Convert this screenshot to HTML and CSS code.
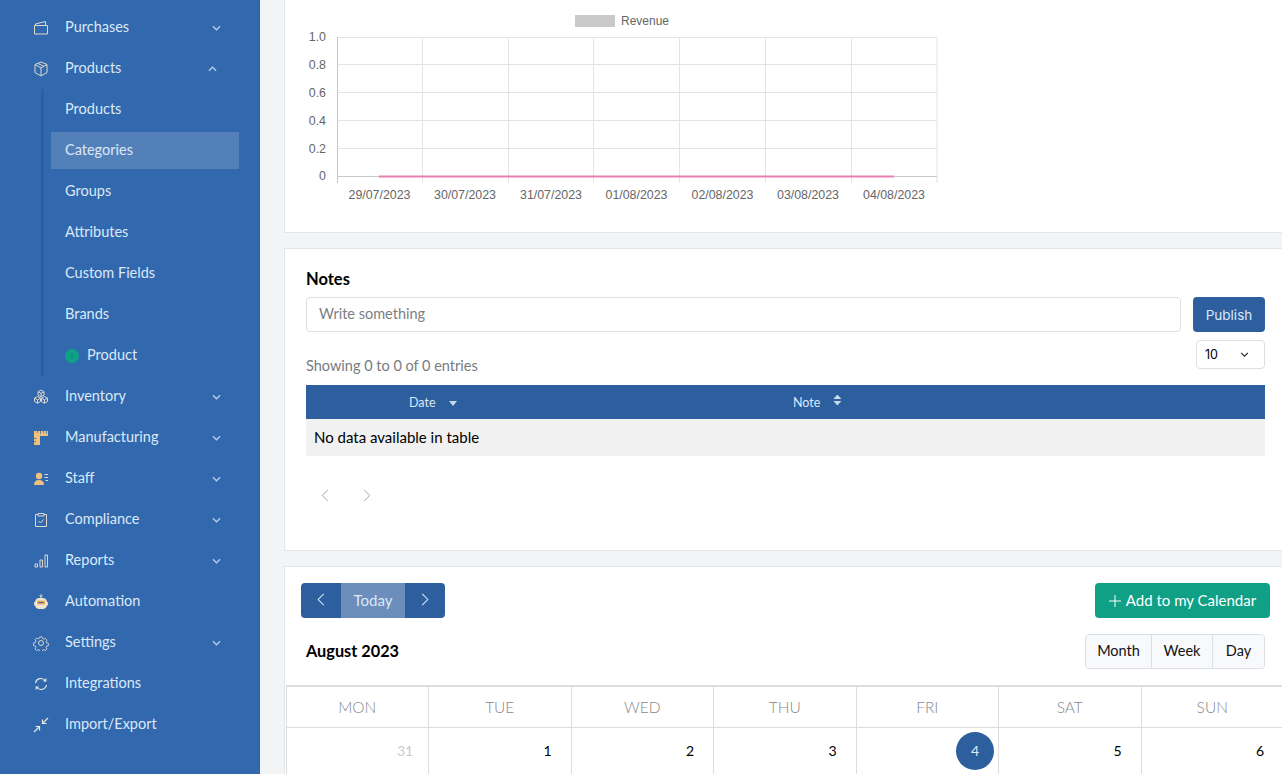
FILE: index.html
```html
<!DOCTYPE html>
<html lang="en">
<head>
    <meta charset="UTF-8">
    <title>Dashboard</title>
    <link rel="stylesheet" href="styles.css">
</head>
<body>
    <aside class="sidebar">
        <a class="nav-item"><svg class="nav-icon" viewBox="0 0 16 16"><path d="M1.500 5.500h13v8.500h-13zM2.500 5.500v-1.500l10-2.500v4"/></svg><span class="nav-label">Purchases</span><svg class="chev" viewBox="0 0 10 6"><path d="M1 1l4 4 4-4"/></svg></a>
        <a class="nav-item"><svg class="nav-icon" viewBox="0 0 16 16"><path d="M8 1l6 2.500v8L8 15l-6-3.500v-8zM2 3.500L8 7l6-3.500M8 7v8M5 2.500l6 3"/></svg><span class="nav-label">Products</span><svg class="chev chev-up" viewBox="0 0 10 6"><path d="M1 5l4-4 4 4"/></svg></a>

        <div class="subnav">
            <a class="sub-item">Products</a>
            <a class="sub-item active">Categories</a>
            <a class="sub-item">Groups</a>
            <a class="sub-item">Attributes</a>
            <a class="sub-item">Custom Fields</a>
            <a class="sub-item">Brands</a>
            <a class="sub-item"><span class="dot"></span>Product</a>
        </div>

        <a class="nav-item"><svg class="nav-icon" viewBox="0 0 16 16"><path d="M8 1l3 1.700v3.300l-3 1.700-3-1.700V2.700zM5 2.700l3 1.700 3-1.700M8 4.400V8M4.500 7.500l3 1.700v3.300l-3 1.700-3-1.700V9.200zM1.500 9.200l3 1.700 3-1.700M4.500 10.900v3.300M11.500 7.500l3 1.700v3.300l-3 1.700-3-1.700V9.200zM8.500 9.200l3 1.700 3-1.700M11.500 10.900v3.300"/></svg><span class="nav-label">Inventory</span><svg class="chev" viewBox="0 0 10 6"><path d="M1 1l4 4 4-4"/></svg></a>
        <a class="nav-item"><svg class="nav-icon solid" viewBox="0 0 16 16"><path d="M1 1h14v5H7v9H1z"/><path class="notch" d="M4.500 1v2M7.500 1v3M10.500 1v2M13.500 1v3M1 8.500h2.500M1 11.500h2"/></svg><span class="nav-label">Manufacturing</span><svg class="chev" viewBox="0 0 10 6"><path d="M1 1l4 4 4-4"/></svg></a>
        <a class="nav-item"><svg class="nav-icon solid" viewBox="0 0 16 16"><circle cx="6" cy="5" r="3.200"/><path d="M1 14c0-3.200 2-5 5-5s5 1.800 5 5z"/><path class="thin" d="M11.500 3.500H15M11.500 6.500H15M12.500 9.500H15"/></svg><span class="nav-label">Staff</span><svg class="chev" viewBox="0 0 10 6"><path d="M1 1l4 4 4-4"/></svg></a>
        <a class="nav-item"><svg class="nav-icon" viewBox="0 0 16 16"><path d="M5 2.500H2.500v12h11v-12H11M5 1.500h6v2.500H5zM5.500 9l2 2 3-3.500"/></svg><span class="nav-label">Compliance</span><svg class="chev" viewBox="0 0 10 6"><path d="M1 1l4 4 4-4"/></svg></a>
        <a class="nav-item"><svg class="nav-icon" viewBox="0 0 16 16"><path d="M2 11h2.500v3H2zM7 7h2.500v7H7zM12 2h2.500v12H12z"/></svg><span class="nav-label">Reports</span><svg class="chev" viewBox="0 0 10 6"><path d="M1 1l4 4 4-4"/></svg></a>
        <a class="nav-item"><svg class="nav-icon robot" viewBox="0 0 16 16"><circle cx="8" cy="1.800" r="1"/><path d="M8 2.800v1.700M1.500 8v3.500M14.500 8v3.500"/><rect class="head" x="2.500" y="4.500" width="11" height="10" rx="3.500"/><rect class="face" x="4" y="6.500" width="8" height="4" rx="1"/><path class="cut" d="M5.500 8.500h5"/></svg><span class="nav-label">Automation</span></a>
        <a class="nav-item"><svg class="nav-icon" viewBox="0 0 16 16"><circle cx="8" cy="8" r="2.500"/><path d="M6.700 1.200h2.600l.4 1.900 1.500.7 1.700-.9 1.800 1.900-1 1.600.6 1.500 1.900.5v2.600l-1.900.4-.6 1.500 1 1.700-1.800 1.800-1.700-1-1.500.6-.4 1.900H6.700l-.4-1.900-1.500-.6-1.700 1-1.800-1.800 1-1.700-.6-1.500-1.900-.4V7.900l1.900-.5.6-1.500-1-1.600 1.800-1.900 1.700.9 1.500-.7z" transform="translate(.8 .8) scale(.9)"/></svg><span class="nav-label">Settings</span><svg class="chev" viewBox="0 0 10 6"><path d="M1 1l4 4 4-4"/></svg></a>
        <a class="nav-item"><svg class="nav-icon bright" viewBox="0 0 16 16"><path d="M2.500 7a5.500 5.500 0 0 1 10-2M13.500 9a5.500 5.500 0 0 1-10 2M12.800 2.500V5h-2.500M3.200 13.500V11h2.500"/></svg><span class="nav-label">Integrations</span></a>
        <a class="nav-item"><svg class="nav-icon bright" viewBox="0 0 16 16"><path d="M15 1L9.500 6.500M9.500 2.500v4h4M1 15l5.500-5.500M2.500 9.500h4v4"/></svg><span class="nav-label">Import/Export</span></a>
    </aside>

    <main class="content">
        <section class="card chart-card">
            <svg class="chart" width="660" height="210" viewBox="0 0 660 210">
                <rect class="legend-box" x="290" y="15" width="40" height="12"/>
                <text class="chart-text legend-text" x="336" y="25">Revenue</text>
                <g class="grid">
                    <path d="M52 37.500H652M52 64.500H652M52 92.500H652M52 120.500H652M52 148.500H652"/>
                    <path d="M137.500 37v146M223.500 37v146M308.500 37v146M394.500 37v146M480.500 37v146M566.500 37v146M652 37v146"/>
                </g>
                <path class="axis" d="M52.500 37v146M52 176.500H652"/>
                <g class="chart-text y-labels">
                    <text x="41" y="41">1.0</text>
                    <text x="41" y="69">0.8</text>
                    <text x="41" y="97">0.6</text>
                    <text x="41" y="125">0.4</text>
                    <text x="41" y="153">0.2</text>
                    <text x="41" y="180">0</text>
                </g>
                <path class="rev-line" d="M94 176.500H609"/>
                <g class="chart-text x-labels">
                    <text x="94.500" y="199">29/07/2023</text>
                    <text x="180" y="199">30/07/2023</text>
                    <text x="266" y="199">31/07/2023</text>
                    <text x="351.500" y="199">01/08/2023</text>
                    <text x="437.500" y="199">02/08/2023</text>
                    <text x="523" y="199">03/08/2023</text>
                    <text x="609" y="199">04/08/2023</text>
                </g>
            </svg>
        </section>

        <section class="card notes-card">
            <h3 class="card-title">Notes</h3>
            <div class="note-form">
                <input class="note-input" type="text" placeholder="Write something">
                <button class="btn-publish">Publish</button>
            </div>
            <div class="table-top">
                <span class="table-info">Showing 0 to 0 of 0 entries</span>
                <div class="page-size">10<svg class="size-chev" viewBox="0 0 10 6"><path d="M1 1l4 4 4-4"/></svg></div>
            </div>
            <table class="notes-table">
                <thead>
                    <tr>
                        <th class="col-date"><span class="th-wrap">Date<span class="sort-down"></span></span></th>
                        <th class="col-note"><span class="th-wrap">Note<span class="sort-both"></span></span></th>
                    </tr>
                </thead>
                <tbody>
                    <tr><td colspan="2"><span class="no-data">No data available in table</span></td></tr>
                </tbody>
            </table>
            <div class="pager">
                <svg viewBox="0 0 8 14"><path d="M7 1L1 7l6 6"/></svg>
                <svg viewBox="0 0 8 14"><path d="M1 1l6 6-6 6"/></svg>
            </div>
        </section>

        <section class="card cal-card">
            <div class="cal-top">
                <div class="cal-nav">
                    <button class="cal-arrow"><svg viewBox="0 0 8 14"><path d="M7 1L1 7l6 6"/></svg></button>
                    <button class="cal-today">Today</button>
                    <button class="cal-arrow"><svg viewBox="0 0 8 14"><path d="M1 1l6 6-6 6"/></svg></button>
                </div>
                <button class="btn-add"><svg viewBox="0 0 12 12"><path d="M6 0v12M0 6h12"/></svg>Add to my Calendar</button>
            </div>
            <div class="cal-head">
                <h3 class="cal-title">August 2023</h3>
                <div class="view-switch">
                    <button class="view-month">Month</button>
                    <button class="view-week">Week</button>
                    <button class="view-day">Day</button>
                </div>
            </div>
            <div class="cal-grid">
                <div class="dow">MON</div>
                <div class="dow">TUE</div>
                <div class="dow">WED</div>
                <div class="dow">THU</div>
                <div class="dow">FRI</div>
                <div class="dow">SAT</div>
                <div class="dow">SUN</div>
                <div class="day muted"><span class="day-num">31</span></div>
                <div class="day"><span class="day-num">1</span></div>
                <div class="day"><span class="day-num">2</span></div>
                <div class="day"><span class="day-num">3</span></div>
                <div class="day"><span class="day-num today">4</span></div>
                <div class="day"><span class="day-num">5</span></div>
                <div class="day"><span class="day-num">6</span></div>
            </div>
        </section>
    </main>
</body>
</html>
```

FILE: styles.css
```css
* {
    box-sizing: border-box;
}

html, body {
    height: 774px;
    overflow: hidden;
}

body {
    margin: 0;
    display: flex;
    font-family: "Lato", "Open Sans", sans-serif;
    font-size: 14.500px;
    background: #f3f4f6;
    color: #000;
}

button {
    font-family: inherit;
    cursor: pointer;
}

/* sidebar */
.sidebar {
    width: 260px;
    flex-shrink: 0;
    height: 774px;
    padding-top: 7px;
    background: #3269ae;
    border-right: 1px solid #2d62a2;
    color: #dbe8f8;
}

.nav-item {
    display: flex;
    align-items: center;
    height: 41px;
    padding-left: 33px;
}

.nav-icon {
    width: 16px;
    height: 16px;
    margin-right: 16px;
    fill: none;
    stroke: #dcd8cc;
    stroke-width: 1;
}

.nav-icon.bright {
    stroke: #e8e8e4;
    stroke-width: 1.200;
}

.nav-icon.solid {
    fill: #eec27e;
    stroke: none;
}

.nav-icon .notch {
    stroke: #3269ae;
    fill: none;
    opacity: .7;
}

.nav-icon .thin {
    stroke: #dcd8cc;
    fill: none;
}

.nav-icon.robot .head {
    fill: #f0e4cc;
    stroke: #f0e4cc;
}

.nav-icon.robot .face {
    fill: #eaa95c;
    stroke: none;
}

.nav-icon .cut {
    stroke: #3269ae;
    fill: none;
}

.nav-label {
    flex: 1;
    margin-bottom: 2px;
}

.chev {
    width: 9px;
    height: 6px;
    margin-top: 1px;
    margin-right: 38px;
    fill: none;
    stroke: #b9cfe9;
    stroke-width: 1.400;
}

.chev-up {
    margin-top: 0;
    margin-right: 42px;
}

.subnav {
    display: flex;
    flex-direction: column;
    gap: 4px;
    margin-left: 41px;
    padding: 2px 0 2px 7px;
    border-left: 3px solid #2d5f9e;
}

.sub-item {
    display: flex;
    align-items: center;
    height: 37px;
    width: 188px;
    padding: 0 0 2px 14px;
}

.sub-item.active {
    background: #5480b9;
}

.dot {
    position: relative;
    width: 14px;
    height: 14px;
    margin: 2px 8px 0 0;
    border-radius: 50%;
    background: #0fa085;
}

.dot::after {
    content: "";
    position: absolute;
    left: 6px;
    top: 4px;
    width: 2px;
    height: 6px;
    background: #0c8f78;
}

/* main column */
.content {
    flex: 1;
    min-width: 0;
    padding-left: 24px;
    overflow: hidden;
}

.card {
    width: 1010px;
    margin-bottom: 15px;
    background: #fff;
    border: 1px solid #e3e5e8;
    border-right: none;
}

.chart-card {
    height: 234px;
    margin-top: -1px;
}

.chart {
    display: block;
}

.chart-text {
    font-family: "Liberation Sans", Arial, sans-serif;
    font-size: 12.400px;
    fill: #666;
}

.legend-text {
    font-size: 12px;
}

.y-labels {
    text-anchor: end;
}

.x-labels {
    text-anchor: middle;
}

.legend-box {
    fill: #c9c9c9;
}

.grid path {
    fill: none;
    stroke: #e4e4e4;
    stroke-width: 1;
}

.axis {
    fill: none;
    stroke: #c8c8c8;
    stroke-width: 1;
}

.rev-line {
    fill: none;
    stroke: #e77fb3;
    stroke-width: 2;
}

.notes-card {
    height: 303px;
    padding: 21px 16px 0 21px;
}

.card-title {
    margin: 0 0 8px;
    font-size: 16.500px;
    line-height: 19px;
    font-weight: 700;
}

.note-form {
    display: flex;
    gap: 12px;
    width: 959px;
}

.note-input {
    flex: 1;
    height: 35px;
    padding: 0 12px 2px;
    font-family: inherit;
    font-size: 14.500px;
    border: 1px solid #dcdfe3;
    border-radius: 4px;
    background: #fff;
}

.note-input::placeholder {
    color: #7b7f85;
}

.btn-publish {
    width: 72px;
    height: 35px;
    padding: 0;
    font-family: "Inter", sans-serif;
    font-size: 13.500px;
    color: #dbe8f8;
    background: #2d5f9e;
    border: none;
    border-radius: 4px;
}

.table-top {
    display: flex;
    justify-content: space-between;
    align-items: flex-end;
    width: 959px;
    height: 45px;
    margin-top: 8px;
}

.table-info {
    color: #777b80;
    line-height: 18px;
    margin-bottom: 10px;
}

.page-size {
    display: flex;
    align-items: center;
    justify-content: space-between;
    width: 69px;
    height: 29px;
    margin-bottom: 16px;
    padding: 0 15px 0 8px;
    font-family: "Inter", sans-serif;
    font-size: 12.500px;
    border: 1px solid #dcdfe3;
    border-radius: 4px;
}

.size-chev {
    width: 9px;
    height: 5px;
    fill: none;
    stroke: #222;
    stroke-width: 1.300;
}

.notes-table {
    width: 959px;
    border-collapse: collapse;
}

.notes-table th {
    height: 34px;
    padding: 0;
    font-size: 12.500px;
    font-weight: 400;
    color: #dbe8f8;
    background: #2d5f9e;
    text-align: left;
}

.col-date {
    width: 487px;
    padding-left: 103px !important;
}

.th-wrap {
    display: inline-flex;
    align-items: center;
}

.sort-down {
    width: 0;
    height: 0;
    margin-left: 13px;
    margin-top: 2px;
    border: 4px solid transparent;
    border-top: 5px solid #c8d8ec;
    border-bottom: none;
}

.sort-both {
    width: 8px;
    height: 11px;
    margin-left: 13px;
    margin-top: -4px;
    clip-path: polygon(50% 0, 100% 40%, 0 40%, 0 60%, 100% 60%, 50% 100%, 0 60%, 0 40%);
    background: #c8d8ec;
}

.notes-table td {
    height: 37px;
    padding: 0 8px;
    background: #f1f1f1;
}

.no-data {
    position: relative;
    top: -1px;
    font-size: 15px;
}

.pager {
    display: flex;
    gap: 34px;
    margin-top: 33px;
    margin-left: 15px;
}

.pager svg {
    width: 8px;
    height: 13px;
    fill: none;
    stroke: #9a9da1;
    stroke-width: 1;
}

.cal-top {
    display: flex;
    justify-content: space-between;
    padding: 16px 0 0 16px;
    width: 985px;
}

.cal-nav {
    display: flex;
    height: 35px;
    border-radius: 4px;
    overflow: hidden;
}

.cal-nav button {
    border: none;
    padding: 0 0 2px;
    color: #dbe8f8;
    font-size: 15px;
}

.cal-arrow {
    display: flex;
    align-items: center;
    justify-content: center;
    width: 40px;
    background: #2d5f9e;
}

.cal-arrow svg {
    width: 8px;
    height: 13px;
    fill: none;
    stroke: #dbe8f8;
    stroke-width: 1.100;
}

.cal-nav .cal-today {
    width: 64px;
    background: #6b8eba;
}

.btn-add {
    display: flex;
    align-items: center;
    justify-content: center;
    gap: 5px;
    width: 175px;
    height: 35px;
    padding: 0 0 2px;
    font-size: 15px;
    color: #fff;
    background: #0fa085;
    border: none;
    border-radius: 4px;
}

.btn-add svg {
    width: 12px;
    height: 12px;
    margin-top: 2px;
    fill: none;
    stroke: #fff;
    stroke-width: 1;
}

.cal-head {
    display: flex;
    justify-content: space-between;
    align-items: center;
    width: 980px;
    height: 35px;
    margin-top: 16px;
    padding-left: 21px;
}

.cal-title {
    margin: 0 0 2px;
    font-size: 16.300px;
    font-weight: 700;
}

.view-switch {
    display: flex;
    height: 35px;
    border: 1px solid #dcdfe3;
    border-radius: 4px;
    overflow: hidden;
}

.view-switch button {
    padding: 0 0 2px;
    font-size: 14.500px;
    color: #111;
    background: #f8f9fa;
    border: none;
    border-left: 1px solid #dcdfe3;
}

.view-switch .view-month {
    width: 65px;
    border-left: none;
}

.view-week {
    width: 61px;
}

.view-day {
    width: 52px;
}

.cal-grid {
    display: grid;
    grid-template-columns: repeat(7, 142.500px);
    margin: 16px 0 0 .5px;
    border-top: 2px solid #dddddd;
}

.dow {
    height: 41px;
    line-height: 40px;
    font-size: 15.500px;
    font-weight: 300;
    text-align: center;
    color: #85888c;
    border-left: 1px solid #dddddd;
    border-bottom: 1px solid #dddddd;
}

.day {
    display: flex;
    justify-content: flex-end;
    height: 50px;
    padding: 4px 4px 0 0;
    font-size: 14px;
    border-left: 1px solid #dddddd;
}

.day.muted {
    color: #c9cbcd;
}

.day-num {
    width: 38px;
    height: 38px;
    line-height: 38px;
    text-align: center;
}

.day-num.today {
    border-radius: 50%;
    color: #dbe8f8;
    background: #2d5f9e;
}
```
